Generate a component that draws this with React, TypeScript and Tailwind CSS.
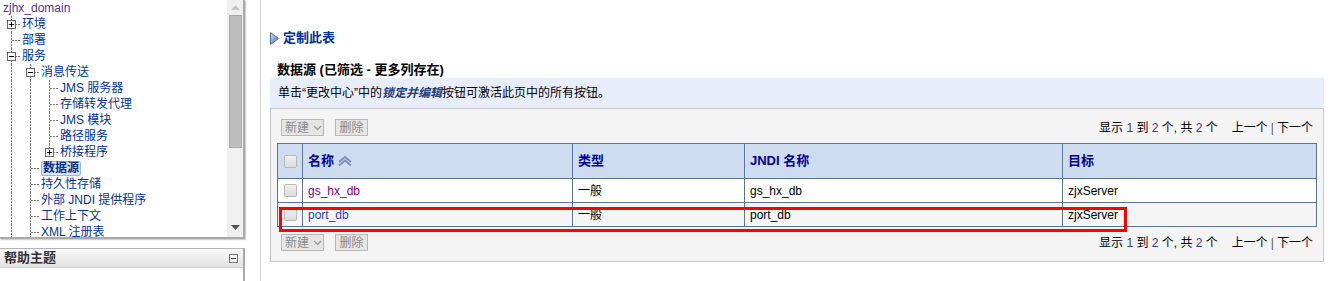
import React from "react";

type TreeRow = {
  label: string;
  level: number;
  box?: "+" | "-";
  last?: boolean;
  selected?: boolean;
};

const tree: TreeRow[] = [
  { label: "zjhx_domain", level: 0 },
  { label: "环境", level: 1, box: "+" },
  { label: "部署", level: 1 },
  { label: "服务", level: 1, box: "-" },
  { label: "消息传送", level: 2, box: "-" },
  { label: "JMS 服务器", level: 3 },
  { label: "存储转发代理", level: 3 },
  { label: "JMS 模块", level: 3 },
  { label: "路径服务", level: 3 },
  { label: "桥接程序", level: 3, box: "+", last: true },
  { label: "数据源", level: 2, selected: true },
  { label: "持久性存储", level: 2 },
  { label: "外部 JNDI 提供程序", level: 2 },
  { label: "工作上下文", level: 2 },
  { label: "XML 注册表", level: 2 },
];

const vDash =
  "bg-[repeating-linear-gradient(to_bottom,#7a7a7a_0_2px,transparent_2px_3px)]";
const hDash =
  "bg-[repeating-linear-gradient(to_right,#7a7a7a_0_2px,transparent_2px_3px)]";

function ToggleBox({ sign }: { sign: "+" | "-" }) {
  return (
    <span className="absolute left-[5px] top-[4px] w-[9px] h-[9px] border border-[#666] bg-white flex items-center justify-center">
      <span className="absolute w-[5px] h-px bg-black" />
      {sign === "+" && <span className="absolute w-px h-[5px] bg-black" />}
    </span>
  );
}

function TreeLine({ row }: { row: TreeRow }) {
  const guides = Array.from({ length: Math.max(row.level - 1, 0) });
  return (
    <div className="flex h-[16px] items-center pl-[2px] whitespace-nowrap">
      {guides.map((_, i) => (
        <span key={i} className="relative w-[19px] h-full shrink-0">
          <span className={`absolute left-[9px] top-0 w-px h-full ${vDash}`} />
        </span>
      ))}
      {row.level > 0 && (
        <span className="relative w-[19px] h-full shrink-0">
          <span
            className={`absolute left-[9px] top-0 w-px ${row.last ? "h-[8px]" : "h-full"} ${vDash}`}
          />
          <span className={`absolute left-[10px] top-[8px] w-[9px] h-px ${hDash}`} />
          {row.box && <ToggleBox sign={row.box} />}
        </span>
      )}
      <span
        className={
          row.level === 0
            ? "pl-px text-[#553399]"
            : row.selected
              ? "ml-px px-px font-bold text-[#0b2f80] bg-[#d8e5ff] border border-[#93b4ee] rounded-[2px] leading-[13px]"
              : "ml-px text-[#003399]"
        }
      >
        {row.label}
      </span>
    </div>
  );
}

function Checkbox() {
  return (
    <span className="inline-block w-[13px] h-[13px] rounded-[2px] border border-[#b9b9b9] bg-gradient-to-b from-[#f0f0f0] to-[#dcdcdc]" />
  );
}

function SortIcon() {
  return (
    <svg width="14" height="10" viewBox="0 0 14 10" className="ml-[4px]">
      <polyline points="1,6 7,1 13,6" fill="none" stroke="#7f93b8" strokeWidth="2" />
      <polyline points="1,9.5 7,4.5 13,9.5" fill="none" stroke="#7f93b8" strokeWidth="2" />
    </svg>
  );
}

function Toolbar() {
  return (
    <div className="flex items-center justify-between h-[17px] pl-[4px] pr-[4px]">
      <div className="flex items-center gap-[11px]">
        <span className="flex items-center h-[17px] w-[43px] pl-[3px] border border-[#b8b8b8] bg-[#e5e5e3] text-[#8a8a8a]">
          新建
          <svg width="9" height="6" viewBox="0 0 9 6" className="ml-[4px]">
            <polyline points="1,1 4.5,4.5 8,1" fill="none" stroke="#999" strokeWidth="1.3" />
          </svg>
        </span>
        <span className="flex items-center h-[17px] w-[33px] justify-center border border-[#b8b8b8] bg-[#e5e5e3] text-[#8a8a8a]">
          删除
        </span>
      </div>
      <div className="flex items-center text-black whitespace-pre">
        <span>显示 </span>
        <span className="text-[#3a3a9c]">1</span>
        <span> 到 </span>
        <span className="text-[#3a3a9c]">2</span>
        <span> 个, 共 </span>
        <span className="text-[#3a3a9c]">2</span>
        <span> 个</span>
        <span className="ml-[14px]">上一个</span>
        <span className="mx-[3px] text-[#555]">|</span>
        <span>下一个</span>
      </div>
    </div>
  );
}

export default function App() {
  const rows = [
    { name: "gs_hx_db", visited: true, type: "一般", jndi: "gs_hx_db", target: "zjxServer", bg: "bg-white" },
    { name: "port_db", visited: false, type: "一般", jndi: "port_db", target: "zjxServer", bg: "bg-[#f5f5f5]" },
  ];

  return (
    <div className="flex w-[1333px] h-[281px] overflow-hidden bg-white text-[12px] font-['Liberation_Sans','Noto_Sans_CJK_SC',sans-serif]">
      {/* left navigation */}
      <div className="w-[245px] shrink-0 flex flex-col">
        <div className="h-[239px] flex border-r-2 border-b-2 border-[#a9a9a9] shadow-[1px_1px_1px_#d0d0d0]">
          <div className="flex-1 overflow-hidden">
            {tree.map((r, i) => (
              <TreeLine key={i} row={r} />
            ))}
          </div>
          <div className="w-[16px] bg-[#f0f0f0] flex flex-col items-center">
            <svg width="9" height="5" viewBox="0 0 9 5" className="mt-[5px]">
              <polygon points="0,5 4.5,0 9,5" fill="#c4c4c4" />
            </svg>
            <div className="mt-[5px] w-[13px] h-[133px] bg-[#bdbdbd] border border-[#a8a8a8]" />
            <div className="flex-1" />
            <svg width="9" height="5" viewBox="0 0 9 5" className="mb-[7px]">
              <polygon points="0,0 4.5,5 9,0" fill="#555" />
            </svg>
          </div>
        </div>
        <div className="mt-[9px] flex-1 border-t border-r-2 border-[#b5b5b5] border-r-[#a9a9a9]">
          <div className="h-[19px] flex items-center justify-between pl-[4px] pr-[5px] bg-gradient-to-b from-[#f9f9f9] to-[#e3e3e3] border-b border-[#d4d4d4]">
            <span className="font-bold text-[13px] text-[#333]">帮助主题</span>
            <span className="relative w-[9px] h-[9px] border border-[#777] bg-[#f4f4f4] flex items-center justify-center">
              <span className="w-[5px] h-px bg-[#444]" />
            </span>
          </div>
        </div>
      </div>

      <div className="w-[15px] shrink-0" />

      {/* main content */}
      <div className="flex-1 border-l border-r border-[#cfcfcf] px-[9px] pt-[30px]">
        <div className="flex items-center h-[16px]">
          <svg width="9" height="13" viewBox="0 0 9 13" className="mr-[4px]">
            <defs>
              <linearGradient id="tri" x1="0" y1="0" x2="1" y2="1">
                <stop offset="0" stopColor="#dfe8f7" />
                <stop offset="1" stopColor="#3b64a8" />
              </linearGradient>
            </defs>
            <polygon points="0.5,0.5 8.5,6.5 0.5,12.5" fill="url(#tri)" stroke="#4a6aa5" strokeWidth="1" />
          </svg>
          <span className="font-bold text-[13px] text-[#003399]">定制此表</span>
        </div>

        <div className="mt-[16px] h-[16px] pl-[7px] flex items-center font-bold text-[13px] text-black">
          数据源 (已筛选 - 更多列存在)
        </div>

        <div className="h-[30px] flex items-center pl-[8px] bg-[#e7edfa] text-black">
          单击“更改中心”中的
          <span className="font-bold italic text-[#1f3d7a]">锁定并编辑</span>
          按钮可激活此页中的所有按钮。
        </div>

        <div className="border border-[#c8c8c8] bg-[#f4f4f4] px-[6px] pt-[10px] pb-[10px]">
          <Toolbar />
          <div className="relative mt-[7px]">
            <table className="w-[1039px] border-collapse table-fixed">
              <colgroup>
                <col className="w-[25px]" />
                <col className="w-[270px]" />
                <col className="w-[172px]" />
                <col className="w-[318px]" />
                <col className="w-[254px]" />
              </colgroup>
              <thead>
                <tr className="h-[35px] bg-[#cedcef] text-[#000099] text-[13px] font-bold">
                  <th className="border border-[#5b7597] text-center align-middle">
                    <span className="flex justify-center"><Checkbox /></span>
                  </th>
                  <th className="border border-[#5b7597] text-left pl-[5px]">
                    <span className="flex items-center">名称<SortIcon /></span>
                  </th>
                  <th className="border border-[#5b7597] text-left pl-[5px]">类型</th>
                  <th className="border border-[#5b7597] text-left pl-[5px]">JNDI 名称</th>
                  <th className="border border-[#5b7597] text-left pl-[5px]">目标</th>
                </tr>
              </thead>
              <tbody>
                {rows.map((r) => (
                  <tr key={r.name} className={`h-[24px] ${r.bg}`}>
                    <td className="border border-[#5b7597]">
                      <span className="flex justify-center"><Checkbox /></span>
                    </td>
                    <td className={`border border-[#5b7597] pl-[5px] ${r.visited ? "text-[#800080]" : "text-[#2a3fc0]"}`}>
                      {r.name}
                    </td>
                    <td className="border border-[#5b7597] pl-[5px] text-black">{r.type}</td>
                    <td className="border border-[#5b7597] pl-[5px] text-black">{r.jndi}</td>
                    <td className="border border-[#5b7597] pl-[5px] text-black">{r.target}</td>
                  </tr>
                ))}
              </tbody>
            </table>
            {/* highlight drawn over the second row */}
            <div className="absolute left-[2px] top-[64px] w-[848px] h-[25px] border-[3px] border-[#ff0000] pointer-events-none" />
          </div>
          <div className="mt-[7px]">
            <Toolbar />
          </div>
        </div>
      </div>
    </div>
  );
}
